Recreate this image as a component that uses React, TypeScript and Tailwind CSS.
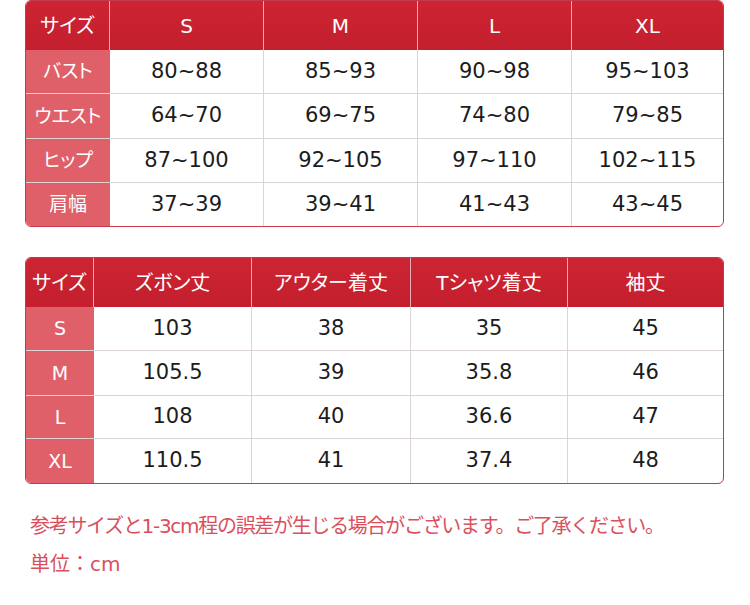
const FONT = "[font-family:'DejaVu_Sans','Noto_Sans_CJK_JP',sans-serif]"

const TOP_COLS = 'grid-cols-[84px_154px_154px_154px_1fr]'
const BOTTOM_COLS = 'grid-cols-[68px_158px_159px_157px_1fr]'

const TOP = {
  head: ['サイズ', 'S', 'M', 'L', 'XL'],
  rows: [
    { h: 'h-[44px]', cells: ['バスト', '80~88', '85~93', '90~98', '95~103'] },
    { h: 'h-[45px]', cells: ['ウエスト', '64~70', '69~75', '74~80', '79~85'] },
    { h: 'h-[44px]', cells: ['ヒップ', '87~100', '92~105', '97~110', '102~115'] },
    { h: 'h-[43px]', cells: ['肩幅', '37~39', '39~41', '41~43', '43~45'] },
  ],
}

const BOTTOM = {
  head: ['サイズ', 'ズボン丈', 'アウター着丈', 'Tシャツ着丈', '袖丈'],
  rows: [
    { h: 'h-[44px]', cells: ['S', '103', '38', '35', '45'] },
    { h: 'h-[45px]', cells: ['M', '105.5', '39', '35.8', '46'] },
    { h: 'h-[43px]', cells: ['L', '108', '40', '36.6', '47'] },
    { h: 'h-[44px]', cells: ['XL', '110.5', '41', '37.4', '48'] },
  ],
}

function SizeTable({
  cols,
  data,
}: {
  cols: string
  data: { head: string[]; rows: { h: string; cells: string[] }[] }
}) {
  return (
    <div className="w-[699px] overflow-hidden rounded-[6px] border border-[#c43a48] bg-white">
      {/* header */}
      <div className={`grid ${cols} h-[49px] bg-gradient-to-b from-[#cc2433] to-[#c41f2e]`}>
        {data.head.map((t, i) => (
          <div
            key={i}
            className={`flex items-center justify-center text-[20px] text-white [font-feature-settings:'palt'] ${
              i < data.head.length - 1 ? 'border-r border-[#e9aeb3]' : ''
            }`}
          >
            {t}
          </div>
        ))}
      </div>

      {/* body */}
      {data.rows.map((r, ri) => (
        <div
          key={ri}
          className={`grid ${cols} ${r.h} ${ri < data.rows.length - 1 ? 'border-b border-[#dcd4d5]' : ''}`}
        >
          {r.cells.map((c, ci) =>
            ci === 0 ? (
              <div
                key={ci}
                className="flex items-center justify-center bg-[#e0606a] text-[19px] text-white [font-feature-settings:'palt']"
              >
                {c}
              </div>
            ) : (
              <div
                key={ci}
                className={`flex items-center justify-center text-[21px] text-[#1c1c1c] ${
                  ci < r.cells.length - 1 ? 'border-r border-[#dcd4d5]' : ''
                }`}
              >
                {c}
              </div>
            ),
          )}
        </div>
      ))}
    </div>
  )
}

export default function App() {
  return (
    <div className={`h-[605px] w-[750px] bg-white pl-[25px] ${FONT}`}>
      <SizeTable cols={TOP_COLS} data={TOP} />

      <div className="mt-[30px]">
        <SizeTable cols={BOTTOM_COLS} data={BOTTOM} />
      </div>

      {/* notes */}
      <div className="ml-[5px] mt-[22px] text-[20px] leading-[40px] text-[#d9505c]">
        <p className="tracking-[-1.3px]">
          参考サイズと1-3cm程の誤差が生じる場合がございます。ご了承ください。
        </p>
        <p className="-mt-[2px]">単位：cm</p>
      </div>
    </div>
  )
}
